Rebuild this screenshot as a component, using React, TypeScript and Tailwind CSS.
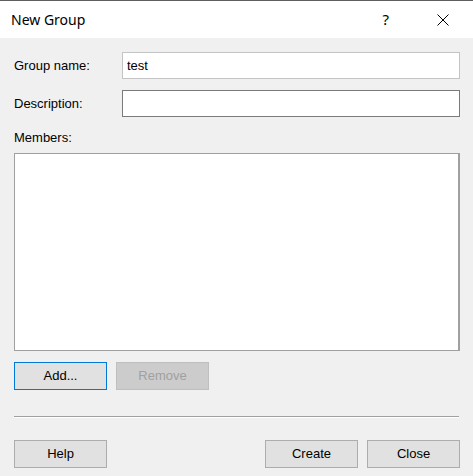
import React from 'react';

const label = "text-[13px] text-black";

const WinButton = ({ children, variant = 'normal' }: { children: React.ReactNode; variant?: 'normal' | 'default' | 'disabled' }) => {
  const styles =
    variant === 'default'
      ? 'border-[#0078d7] bg-[#e1e1e1] text-black'
      : variant === 'disabled'
      ? 'border-[#bfbfbf] bg-[#cccccc] text-[#a0a0a0]'
      : 'border-[#adadad] bg-[#e1e1e1] text-black';
  return (
    <button className={`w-[93px] h-[28px] border text-[13px] flex items-center justify-center ${styles}`}>
      {children}
    </button>
  );
};

export default function App() {
  return (
    <div className="w-[473px] h-[476px] bg-[#f0f0f0] flex flex-col" style={{ fontFamily: '"Liberation Sans", Arial, sans-serif' }}>
      {/* Title bar */}
      <div className="h-[38px] border-t border-[#5f5f5f] bg-white flex items-center shrink-0">
        <span className="ml-[11px] text-[14px] text-black" style={{ fontFamily: '"Noto Sans", sans-serif' }}>
          New Group
        </span>
        <span className="ml-auto mr-[48px] text-[15px] text-black" style={{ fontFamily: '"Noto Sans", sans-serif' }}>
          ?
        </span>
        <svg width="12" height="12" viewBox="0 0 12 12" className="mr-[24px]">
          <path d="M0.5 0.5 L11.5 11.5 M11.5 0.5 L0.5 11.5" stroke="#000" strokeWidth="1" />
        </svg>
      </div>

      {/* Body */}
      <div className="flex flex-col pl-[14px] pr-[13px] pt-[14px]">
        <div className="flex items-center h-[27px]">
          <span className={`${label} w-[108px]`}>Group name:</span>
          <div className="flex-1 h-full bg-white border border-[#c4c4c4] flex items-center px-[4px] text-[13px] text-black">
            test
          </div>
        </div>
        <div className="flex items-center h-[27px] mt-[11px]">
          <span className={`${label} w-[108px]`}>Description:</span>
          <div className="flex-1 h-full bg-white border border-[#7a7a7a]" />
        </div>
        <div className="h-[36px] flex items-center pt-[6px]">
          <span className={label}>Members:</span>
        </div>
        <div className="h-[198px] bg-white border border-[#a0a0a0] border-r-2" />
        <div className="flex gap-[9px] mt-[11px]">
          <WinButton variant="default">Add...</WinButton>
          <WinButton variant="disabled">Remove</WinButton>
        </div>
        <div className="mt-[26px] border-t border-[#a0a0a0] border-b border-b-white mr-[1px]" />
        <div className="flex mt-[22px]">
          <WinButton>Help</WinButton>
          <div className="ml-auto flex gap-[9px]">
            <WinButton>Create</WinButton>
            <WinButton>Close</WinButton>
          </div>
        </div>
      </div>
    </div>
  );
}
